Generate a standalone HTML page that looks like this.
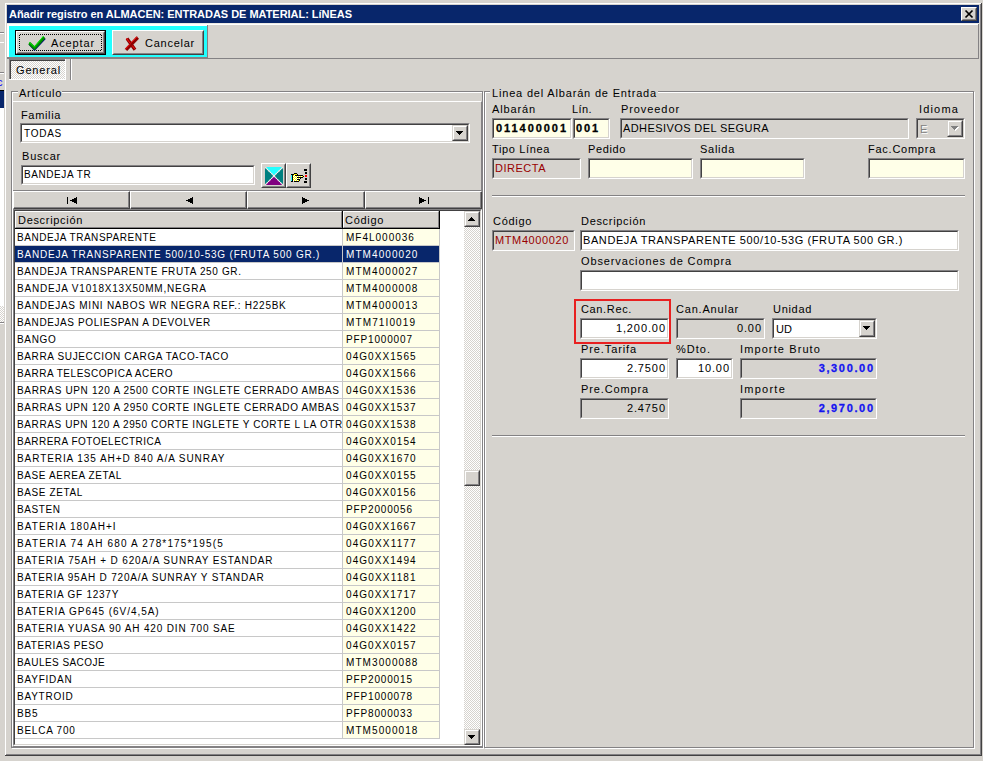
<!DOCTYPE html>
<html><head><meta charset="utf-8"><style>
html,body{margin:0;padding:0;}
body{width:983px;height:761px;overflow:hidden;position:relative;background:#d6d3ce;font-family:"Liberation Sans",sans-serif;font-size:11px;}
div,svg{position:absolute;box-sizing:content-box;}
.t{white-space:pre;line-height:13px;color:#000;font-size:11px;}
</style></head><body>
<div style="left:0px;top:32px;width:4px;height:1px;background:#848284;"></div>
<div style="left:0px;top:33px;width:4px;height:1px;background:#ffffff;"></div>
<div style="left:0px;top:42px;width:4px;height:1px;background:#ffffff;"></div>
<div style="left:0px;top:72px;width:4px;height:1px;background:#848284;"></div>
<div style="left:0px;top:73px;width:4px;height:1px;background:#ffffff;"></div>
<div class="t" style="left:-3px;top:76px;color:#0000ff">c</div>
<div style="left:0px;top:90px;width:4px;height:1px;background:#000;"></div>
<div style="left:0px;top:91px;width:4px;height:17px;background:#08266b;"></div>
<div style="left:0px;top:108px;width:4px;height:198px;background:#ffffff;"></div>
<div style="left:0px;top:306px;width:4px;height:16px;background:#fff;background-image:repeating-conic-gradient(#ffffff 0 25%, #d6d3ce 0 50%);background-size:2px 2px;"></div>
<div style="left:0px;top:322px;width:4px;height:1px;background:#848284;"></div>
<div style="left:0px;top:323px;width:4px;height:1px;background:#ffffff;"></div>
<div style="left:4px;top:2px;width:978px;height:754px;background:#d6d3ce;"></div>
<div style="left:5px;top:3px;width:1px;height:752px;background:#ffffff;"></div>
<div style="left:5px;top:3px;width:976px;height:1px;background:#ffffff;"></div>
<div style="left:981px;top:3px;width:1px;height:753px;background:#424142;"></div>
<div style="left:5px;top:755px;width:977px;height:1px;background:#424142;"></div>
<div style="left:980px;top:4px;width:1px;height:751px;background:#848284;"></div>
<div style="left:6px;top:754px;width:975px;height:1px;background:#848284;"></div>
<div style="left:7px;top:5px;width:972px;height:18px;background:#08266b;"></div>
<div class="t" style="left:9px;top:8px;letter-spacing:-0.030px;font-weight:bold;color:#fff;">Añadir registro en ALMACEN: ENTRADAS DE MATERIAL: LíNEAS</div>
<div style="left:961px;top:7px;width:14px;height:12px;border:1px solid;border-color:#ffffff #424142 #424142 #ffffff;background:#d6d3ce"></div>
<div style="left:962px;top:8px;width:12px;height:10px;border:1px solid;border-color:#d6d3ce #848284 #848284 #d6d3ce;background:#d6d3ce"></div>
<svg style="left:961px;top:7px" width="16" height="14"><path d="M4.5 3.5 L11.5 10.5 M11.5 3.5 L4.5 10.5" stroke="#000" stroke-width="1.7"/></svg>
<div style="left:7px;top:23px;width:972px;height:1px;background:#eceae4;"></div>
<div style="left:7px;top:24px;width:972px;height:1px;background:#ffffff;"></div>
<div style="left:7px;top:25px;width:200px;height:1px;background:#ffffff;"></div>
<div style="left:7px;top:24px;width:1px;height:34px;background:#ffffff;"></div>
<div style="left:8px;top:24px;width:1px;height:34px;background:#ffffff;"></div>
<div style="left:978px;top:24px;width:1px;height:34px;background:#848284;"></div>
<div style="left:7px;top:57px;width:201px;height:1px;background:#8a8080;"></div>
<div style="left:7px;top:58px;width:972px;height:1px;background:#848284;"></div>
<div style="left:9px;top:26px;width:198px;height:31px;background:#22ffff;"></div>
<div style="left:207px;top:25px;width:1px;height:33px;background:#848284;"></div>
<div style="left:15px;top:30px;width:91px;height:25px;background:#000;"></div>
<div style="left:16px;top:31px;width:87px;height:21px;border:1px solid;border-color:#ffffff #424142 #424142 #ffffff;background:#d6d3ce"></div>
<div style="left:17px;top:32px;width:85px;height:19px;border:1px solid;border-color:#d6d3ce #848284 #848284 #d6d3ce;background:#d6d3ce"></div>
<div style="left:20px;top:34px;width:82px;height:1px;background:transparent;background:repeating-linear-gradient(90deg,#000 0 1px,transparent 1px 2px);"></div>
<div style="left:20px;top:50px;width:82px;height:1px;background:transparent;background:repeating-linear-gradient(90deg,#000 0 1px,transparent 1px 2px);"></div>
<div style="left:19px;top:35px;width:1px;height:15px;background:transparent;background:repeating-linear-gradient(180deg,#000 0 1px,transparent 1px 2px);"></div>
<div style="left:101px;top:35px;width:1px;height:15px;background:transparent;background:repeating-linear-gradient(180deg,#000 0 1px,transparent 1px 2px);"></div>
<svg style="left:24px;top:32px" width="26" height="20"><path d="M5.8 12.2 L10.5 17.2 L20.8 6.2" fill="none" stroke="#000080" stroke-width="2.6"/><path d="M5.2 11.2 L10.5 16.2 L20.2 5.2" fill="none" stroke="#008a00" stroke-width="3"/><path d="M5.2 10.2 L10.5 15 L19.6 4" fill="none" stroke="#00f000" stroke-width="1"/></svg>
<div class="t" style="left:51px;top:37px;letter-spacing:0.870px;">Aceptar</div>
<div style="left:112px;top:30px;width:90px;height:23px;border:1px solid;border-color:#ffffff #424142 #424142 #ffffff;background:#d6d3ce"></div>
<div style="left:113px;top:31px;width:88px;height:21px;border:1px solid;border-color:#d6d3ce #848284 #848284 #d6d3ce;background:#d6d3ce"></div>
<svg style="left:120px;top:32px" width="24" height="20"><path d="M7 6.5 L15 17.8 M17.8 5.5 L6 17.8" stroke="#8c0000" stroke-width="3.3"/><path d="M6.3 6.2 L10.5 11.5 M17 4.8 L11.3 10.6 M10 12.3 L5.3 17.2 M12.3 13.6 L14.6 16.8" stroke="#ff1010" stroke-width="1"/></svg>
<div class="t" style="left:145px;top:37px;letter-spacing:0.747px;">Cancelar</div>
<div style="left:9px;top:58px;width:56px;height:21px;background:#848284;"></div>
<div style="left:10px;top:60px;width:55px;height:19px;background:#424142;"></div>
<div style="left:11px;top:61px;width:54px;height:18px;background:#fff;background-image:repeating-conic-gradient(#ffffff 0 25%, #d6d3ce 0 50%);background-size:2px 2px;"></div>
<div style="left:65px;top:59px;width:1px;height:21px;background:#ffffff;"></div>
<div style="left:9px;top:79px;width:57px;height:1px;background:#ffffff;"></div>
<div class="t" style="left:16px;top:64px;letter-spacing:0.838px;">General</div>
<div style="left:70px;top:59px;width:1px;height:21px;background:#848284;"></div>
<div style="left:71px;top:59px;width:1px;height:21px;background:#ffffff;"></div>
<div style="left:12px;top:92px;width:470px;height:655px;border:1px solid #ffffff"></div>
<div style="left:11px;top:91px;width:470px;height:655px;border:1px solid #848284"></div>
<div style="left:18px;top:85px;width:44px;height:10px;background:#d6d3ce;"></div>
<div class="t" style="left:19px;top:87px;letter-spacing:0.714px;">Artículo</div>
<div style="left:12px;top:101px;width:468px;height:644px;border:1px solid;border-color:#ffffff #848284 #848284 #ffffff"></div>
<div class="t" style="left:21px;top:109px;letter-spacing:0.650px;">Familia</div>
<div style="left:20px;top:123px;width:448px;height:18px;border:1px solid;border-color:#848284 #ffffff #ffffff #848284;background:#d6d3ce"></div>
<div style="left:21px;top:124px;width:446px;height:16px;border:1px solid;border-color:#424142 #d6d3ce #d6d3ce #424142;background:#ffffff"></div>
<div class="t" style="left:24px;top:127px;letter-spacing:0.744px;font-size:10px;">TODAS</div>
<div style="left:452px;top:125px;width:14px;height:14px;border:1px solid;border-color:#d6d3ce #424142 #424142 #d6d3ce;background:#d6d3ce"></div>
<div style="left:453px;top:126px;width:12px;height:12px;border:1px solid;border-color:#ffffff #848284 #848284 #ffffff;background:#d6d3ce"></div>
<div style="left:459px;top:134px;width:1px;height:1px;background:#000"></div><div style="left:458px;top:133px;width:3px;height:1px;background:#000"></div><div style="left:457px;top:132px;width:5px;height:1px;background:#000"></div><div style="left:456px;top:131px;width:7px;height:1px;background:#000"></div>
<div class="t" style="left:22px;top:150px;letter-spacing:0.794px;">Buscar</div>
<div style="left:21px;top:165px;width:232px;height:18px;border:1px solid;border-color:#848284 #ffffff #ffffff #848284;background:#d6d3ce"></div>
<div style="left:22px;top:166px;width:230px;height:16px;border:1px solid;border-color:#424142 #d6d3ce #d6d3ce #424142;background:#ffffff"></div>
<div class="t" style="left:24px;top:168px;letter-spacing:0.574px;font-size:10px;">BANDEJA TR</div>
<div style="left:261px;top:163px;width:23px;height:23px;border:1px solid;border-color:#ffffff #424142 #424142 #ffffff;background:#d6d3ce"></div>
<div style="left:262px;top:164px;width:21px;height:21px;border:1px solid;border-color:#d6d3ce #848284 #848284 #d6d3ce;background:#d6d3ce"></div>
<svg style="left:265px;top:167px" width="18" height="18" shape-rendering="crispEdges"><path d="M1 0 L17 0 L9 9 Z" fill="#22ffff"/><path d="M1 18 L17 18 L9 9 Z" fill="#800080"/><path d="M0 1 L9 9 L0 17 Z" fill="#008080"/><path d="M18 1 L9 9 L18 17 Z" fill="#008080"/></svg>
<svg style="left:265px;top:167px" width="18" height="18"><path d="M0.5 0.5 L17.5 17.5 M17.5 0.5 L0.5 17.5" stroke="#f4f0f0" stroke-width="1.2" stroke-dasharray="1.4 0.7"/></svg>
<div style="left:286px;top:163px;width:23px;height:23px;border:1px solid;border-color:#ffffff #424142 #424142 #ffffff;background:#d6d3ce"></div>
<div style="left:287px;top:164px;width:21px;height:21px;border:1px solid;border-color:#d6d3ce #848284 #848284 #d6d3ce;background:#d6d3ce"></div>
<svg style="left:289px;top:171px" width="16" height="12" shape-rendering="crispEdges"><rect x="5" y="2" width="1" height="1" fill="#000"/><rect x="6" y="2" width="1" height="1" fill="#000"/><rect x="7" y="2" width="1" height="1" fill="#000"/><rect x="2" y="3" width="1" height="1" fill="#000"/><rect x="3" y="3" width="1" height="1" fill="#000"/><rect x="4" y="3" width="1" height="1" fill="#000"/><rect x="5" y="3" width="1" height="1" fill="#ffff00"/><rect x="6" y="3" width="1" height="1" fill="#ffff00"/><rect x="7" y="3" width="1" height="1" fill="#ffff00"/><rect x="8" y="3" width="1" height="1" fill="#000"/><rect x="2" y="4" width="1" height="1" fill="#22ffff"/><rect x="3" y="4" width="1" height="1" fill="#000"/><rect x="4" y="4" width="1" height="1" fill="#ffff00"/><rect x="5" y="4" width="1" height="1" fill="#ffffff"/><rect x="6" y="4" width="1" height="1" fill="#000"/><rect x="7" y="4" width="1" height="1" fill="#000"/><rect x="8" y="4" width="1" height="1" fill="#000"/><rect x="9" y="4" width="1" height="1" fill="#000"/><rect x="10" y="4" width="1" height="1" fill="#000"/><rect x="11" y="4" width="1" height="1" fill="#000"/><rect x="12" y="4" width="1" height="1" fill="#000"/><rect x="13" y="4" width="1" height="1" fill="#000"/><rect x="2" y="5" width="1" height="1" fill="#22ffff"/><rect x="3" y="5" width="1" height="1" fill="#000"/><rect x="4" y="5" width="1" height="1" fill="#ffffff"/><rect x="5" y="5" width="1" height="1" fill="#ffff00"/><rect x="6" y="5" width="1" height="1" fill="#ffffff"/><rect x="7" y="5" width="1" height="1" fill="#ffff00"/><rect x="8" y="5" width="1" height="1" fill="#ffffff"/><rect x="9" y="5" width="1" height="1" fill="#ffff00"/><rect x="10" y="5" width="1" height="1" fill="#ffffff"/><rect x="11" y="5" width="1" height="1" fill="#ffff00"/><rect x="12" y="5" width="1" height="1" fill="#ffffff"/><rect x="13" y="5" width="1" height="1" fill="#ffff00"/><rect x="14" y="5" width="1" height="1" fill="#000"/><rect x="2" y="6" width="1" height="1" fill="#22ffff"/><rect x="3" y="6" width="1" height="1" fill="#000"/><rect x="4" y="6" width="1" height="1" fill="#ffff00"/><rect x="5" y="6" width="1" height="1" fill="#ffffff"/><rect x="6" y="6" width="1" height="1" fill="#ffff00"/><rect x="7" y="6" width="1" height="1" fill="#ffffff"/><rect x="8" y="6" width="1" height="1" fill="#000"/><rect x="9" y="6" width="1" height="1" fill="#000"/><rect x="10" y="6" width="1" height="1" fill="#000"/><rect x="11" y="6" width="1" height="1" fill="#000"/><rect x="12" y="6" width="1" height="1" fill="#000"/><rect x="13" y="6" width="1" height="1" fill="#000"/><rect x="2" y="7" width="1" height="1" fill="#22ffff"/><rect x="3" y="7" width="1" height="1" fill="#000"/><rect x="4" y="7" width="1" height="1" fill="#ffffff"/><rect x="5" y="7" width="1" height="1" fill="#ffff00"/><rect x="6" y="7" width="1" height="1" fill="#ffffff"/><rect x="7" y="7" width="1" height="1" fill="#ffff00"/><rect x="8" y="7" width="1" height="1" fill="#ffffff"/><rect x="9" y="7" width="1" height="1" fill="#ffff00"/><rect x="10" y="7" width="1" height="1" fill="#ffffff"/><rect x="11" y="7" width="1" height="1" fill="#000"/><rect x="2" y="8" width="1" height="1" fill="#22ffff"/><rect x="3" y="8" width="1" height="1" fill="#000"/><rect x="4" y="8" width="1" height="1" fill="#ffff00"/><rect x="5" y="8" width="1" height="1" fill="#ffffff"/><rect x="6" y="8" width="1" height="1" fill="#ffff00"/><rect x="7" y="8" width="1" height="1" fill="#ffffff"/><rect x="8" y="8" width="1" height="1" fill="#000"/><rect x="9" y="8" width="1" height="1" fill="#000"/><rect x="10" y="8" width="1" height="1" fill="#000"/><rect x="2" y="9" width="1" height="1" fill="#22ffff"/><rect x="3" y="9" width="1" height="1" fill="#000"/><rect x="4" y="9" width="1" height="1" fill="#ffffff"/><rect x="5" y="9" width="1" height="1" fill="#ffff00"/><rect x="6" y="9" width="1" height="1" fill="#ffffff"/><rect x="7" y="9" width="1" height="1" fill="#ffff00"/><rect x="8" y="9" width="1" height="1" fill="#ffffff"/><rect x="9" y="9" width="1" height="1" fill="#ffff00"/><rect x="10" y="9" width="1" height="1" fill="#000"/><rect x="2" y="10" width="1" height="1" fill="#000"/><rect x="3" y="10" width="1" height="1" fill="#000"/><rect x="5" y="10" width="1" height="1" fill="#000"/><rect x="6" y="10" width="1" height="1" fill="#000"/><rect x="7" y="10" width="1" height="1" fill="#000"/><rect x="8" y="10" width="1" height="1" fill="#000"/><rect x="9" y="10" width="1" height="1" fill="#000"/></svg>
<svg style="left:286px;top:163px" width="25" height="25" shape-rendering="crispEdges"><rect x="18" y="6" width="3" height="2" fill="#000"/><rect x="19" y="9" width="2" height="2" fill="#000"/><rect x="19" y="12" width="2" height="2" fill="#ff0000"/><rect x="19" y="15" width="2" height="2" fill="#000"/><rect x="18" y="18" width="3" height="2" fill="#000"/></svg>
<div style="left:13px;top:190px;width:469px;height:1px;background:#848284;"></div>
<div style="left:13px;top:191px;width:115px;height:16px;border:1px solid;border-color:#ffffff #424142 #424142 #ffffff;background:#d6d3ce"></div>
<div style="left:14px;top:192px;width:114px;height:15px;border-right:1px solid #848284;border-bottom:1px solid #848284"></div>
<div style="left:130px;top:191px;width:115px;height:16px;border:1px solid;border-color:#ffffff #424142 #424142 #ffffff;background:#d6d3ce"></div>
<div style="left:131px;top:192px;width:114px;height:15px;border-right:1px solid #848284;border-bottom:1px solid #848284"></div>
<div style="left:247px;top:191px;width:116px;height:16px;border:1px solid;border-color:#ffffff #424142 #424142 #ffffff;background:#d6d3ce"></div>
<div style="left:248px;top:192px;width:115px;height:15px;border-right:1px solid #848284;border-bottom:1px solid #848284"></div>
<div style="left:365px;top:191px;width:115px;height:16px;border:1px solid;border-color:#ffffff #424142 #424142 #ffffff;background:#d6d3ce"></div>
<div style="left:366px;top:192px;width:114px;height:15px;border-right:1px solid #848284;border-bottom:1px solid #848284"></div>
<div style="left:67px;top:197px;width:1px;height:7px;background:#000;"></div>
<div style="left:76px;top:197px;width:1px;height:7px;background:#000"></div><div style="left:75px;top:198px;width:1px;height:5px;background:#000"></div><div style="left:74px;top:198px;width:1px;height:5px;background:#000"></div><div style="left:73px;top:199px;width:1px;height:3px;background:#000"></div><div style="left:72px;top:199px;width:1px;height:3px;background:#000"></div><div style="left:71px;top:200px;width:1px;height:1px;background:#000"></div><div style="left:70px;top:200px;width:1px;height:1px;background:#000"></div>
<div style="left:192px;top:197px;width:1px;height:7px;background:#000"></div><div style="left:191px;top:198px;width:1px;height:5px;background:#000"></div><div style="left:190px;top:198px;width:1px;height:5px;background:#000"></div><div style="left:189px;top:199px;width:1px;height:3px;background:#000"></div><div style="left:188px;top:199px;width:1px;height:3px;background:#000"></div><div style="left:187px;top:200px;width:1px;height:1px;background:#000"></div><div style="left:186px;top:200px;width:1px;height:1px;background:#000"></div>
<div style="left:302px;top:197px;width:1px;height:7px;background:#000"></div><div style="left:303px;top:198px;width:1px;height:5px;background:#000"></div><div style="left:304px;top:198px;width:1px;height:5px;background:#000"></div><div style="left:305px;top:199px;width:1px;height:3px;background:#000"></div><div style="left:306px;top:199px;width:1px;height:3px;background:#000"></div><div style="left:307px;top:200px;width:1px;height:1px;background:#000"></div><div style="left:308px;top:200px;width:1px;height:1px;background:#000"></div>
<div style="left:419px;top:197px;width:1px;height:7px;background:#000"></div><div style="left:420px;top:198px;width:1px;height:5px;background:#000"></div><div style="left:421px;top:198px;width:1px;height:5px;background:#000"></div><div style="left:422px;top:199px;width:1px;height:3px;background:#000"></div><div style="left:423px;top:199px;width:1px;height:3px;background:#000"></div><div style="left:424px;top:200px;width:1px;height:1px;background:#000"></div><div style="left:425px;top:200px;width:1px;height:1px;background:#000"></div>
<div style="left:428px;top:197px;width:1px;height:7px;background:#000;"></div>
<div style="left:13px;top:209px;width:467px;height:535px;border:1px solid;border-color:#848284 #ffffff #ffffff #848284;"></div>
<div style="left:14px;top:210px;width:465px;height:533px;border:1px solid;border-color:#424142 #d6d3ce #d6d3ce #424142;background:#fff"></div>
<div style="left:15px;top:211px;width:325px;height:15px;border:1px solid;border-color:#ffffff #848284 #848284 #ffffff;background:#d6d3ce"></div>
<div style="left:343px;top:211px;width:94px;height:15px;border:1px solid;border-color:#ffffff #848284 #848284 #ffffff;background:#d6d3ce"></div>
<div style="left:342px;top:211px;width:1px;height:17px;background:#000;"></div>
<div style="left:439px;top:211px;width:1px;height:17px;background:#000;"></div>
<div style="left:15px;top:228px;width:425px;height:1px;background:#000;"></div>
<div class="t" style="left:18px;top:214px;letter-spacing:0.685px;">Descripción</div>
<div class="t" style="left:345px;top:214px;letter-spacing:0.690px;">Código</div>
<div style="left:343px;top:229px;width:96px;height:16px;background:#ffffe8;"></div>
<div style="left:15px;top:245px;width:425px;height:1px;background:#c8c8c8;"></div>
<div style="left:15px;top:229px;width:327px;height:16px;overflow:hidden">
<div class="t" style="left:2px;top:2px;letter-spacing:0.541px;font-size:10px;color:#000;">BANDEJA TRANSPARENTE</div>
</div>
<div class="t" style="left:346px;top:231px;letter-spacing:1.000px;font-size:10px;color:#000;">MF4L000036</div>
<div style="left:15px;top:246px;width:425px;height:16px;background:#08266b;"></div>
<div style="left:15px;top:262px;width:425px;height:1px;background:#c8c8c8;"></div>
<div style="left:15px;top:246px;width:327px;height:16px;overflow:hidden">
<div class="t" style="left:2px;top:2px;letter-spacing:0.800px;font-size:10px;color:#fff;">BANDEJA TRANSPARENTE 500/10-53G (FRUTA 500 GR.)</div>
</div>
<div class="t" style="left:346px;top:248px;letter-spacing:1.074px;font-size:10px;color:#fff;">MTM4000020</div>
<div style="left:343px;top:263px;width:96px;height:16px;background:#ffffe8;"></div>
<div style="left:15px;top:279px;width:425px;height:1px;background:#c8c8c8;"></div>
<div style="left:15px;top:263px;width:327px;height:16px;overflow:hidden">
<div class="t" style="left:2px;top:2px;letter-spacing:0.622px;font-size:10px;color:#000;">BANDEJA TRANSPARENTE FRUTA 250 GR.</div>
</div>
<div class="t" style="left:346px;top:265px;letter-spacing:1.074px;font-size:10px;color:#000;">MTM4000027</div>
<div style="left:343px;top:280px;width:96px;height:16px;background:#ffffe8;"></div>
<div style="left:15px;top:296px;width:425px;height:1px;background:#c8c8c8;"></div>
<div style="left:15px;top:280px;width:327px;height:16px;overflow:hidden">
<div class="t" style="left:2px;top:2px;letter-spacing:0.808px;font-size:10px;color:#000;">BANDEJA V1018X13X50MM,NEGRA</div>
</div>
<div class="t" style="left:346px;top:282px;letter-spacing:1.074px;font-size:10px;color:#000;">MTM4000008</div>
<div style="left:343px;top:297px;width:96px;height:16px;background:#ffffe8;"></div>
<div style="left:15px;top:313px;width:425px;height:1px;background:#c8c8c8;"></div>
<div style="left:15px;top:297px;width:327px;height:16px;overflow:hidden">
<div class="t" style="left:2px;top:2px;letter-spacing:0.746px;font-size:10px;color:#000;">BANDEJAS MINI NABOS WR NEGRA REF.: H225BK</div>
</div>
<div class="t" style="left:346px;top:299px;letter-spacing:1.074px;font-size:10px;color:#000;">MTM4000013</div>
<div style="left:343px;top:314px;width:96px;height:16px;background:#ffffe8;"></div>
<div style="left:15px;top:330px;width:425px;height:1px;background:#c8c8c8;"></div>
<div style="left:15px;top:314px;width:327px;height:16px;overflow:hidden">
<div class="t" style="left:2px;top:2px;letter-spacing:0.606px;font-size:10px;color:#000;">BANDEJAS POLIESPAN A DEVOLVER</div>
</div>
<div class="t" style="left:346px;top:316px;letter-spacing:1.121px;font-size:10px;color:#000;">MTM71I0019</div>
<div style="left:343px;top:331px;width:96px;height:16px;background:#ffffe8;"></div>
<div style="left:15px;top:347px;width:425px;height:1px;background:#c8c8c8;"></div>
<div style="left:15px;top:331px;width:327px;height:16px;overflow:hidden">
<div class="t" style="left:2px;top:2px;letter-spacing:0.670px;font-size:10px;color:#000;">BANGO</div>
</div>
<div class="t" style="left:346px;top:333px;letter-spacing:0.847px;font-size:10px;color:#000;">PFP1000007</div>
<div style="left:343px;top:348px;width:96px;height:16px;background:#ffffe8;"></div>
<div style="left:15px;top:364px;width:425px;height:1px;background:#c8c8c8;"></div>
<div style="left:15px;top:348px;width:327px;height:16px;overflow:hidden">
<div class="t" style="left:2px;top:2px;letter-spacing:0.633px;font-size:10px;color:#000;">BARRA SUJECCION CARGA TACO-TACO</div>
</div>
<div class="t" style="left:346px;top:350px;letter-spacing:1.070px;font-size:10px;color:#000;">04G0XX1565</div>
<div style="left:343px;top:365px;width:96px;height:16px;background:#ffffe8;"></div>
<div style="left:15px;top:381px;width:425px;height:1px;background:#c8c8c8;"></div>
<div style="left:15px;top:365px;width:327px;height:16px;overflow:hidden">
<div class="t" style="left:2px;top:2px;letter-spacing:0.534px;font-size:10px;color:#000;">BARRA TELESCOPICA ACERO</div>
</div>
<div class="t" style="left:346px;top:367px;letter-spacing:1.070px;font-size:10px;color:#000;">04G0XX1566</div>
<div style="left:343px;top:382px;width:96px;height:16px;background:#ffffe8;"></div>
<div style="left:15px;top:398px;width:425px;height:1px;background:#c8c8c8;"></div>
<div style="left:15px;top:382px;width:327px;height:16px;overflow:hidden">
<div class="t" style="left:2px;top:2px;letter-spacing:0.646px;font-size:10px;color:#000;">BARRAS UPN 120 A 2500 CORTE INGLETE CERRADO AMBAS</div>
</div>
<div class="t" style="left:346px;top:384px;letter-spacing:1.070px;font-size:10px;color:#000;">04G0XX1536</div>
<div style="left:343px;top:399px;width:96px;height:16px;background:#ffffe8;"></div>
<div style="left:15px;top:415px;width:425px;height:1px;background:#c8c8c8;"></div>
<div style="left:15px;top:399px;width:327px;height:16px;overflow:hidden">
<div class="t" style="left:2px;top:2px;letter-spacing:0.646px;font-size:10px;color:#000;">BARRAS UPN 120 A 2950 CORTE INGLETE CERRADO AMBAS</div>
</div>
<div class="t" style="left:346px;top:401px;letter-spacing:1.070px;font-size:10px;color:#000;">04G0XX1537</div>
<div style="left:343px;top:416px;width:96px;height:16px;background:#ffffe8;"></div>
<div style="left:15px;top:432px;width:425px;height:1px;background:#c8c8c8;"></div>
<div style="left:15px;top:416px;width:327px;height:16px;overflow:hidden">
<div class="t" style="left:2px;top:2px;letter-spacing:0.612px;font-size:10px;color:#000;">BARRAS UPN 120 A 2950 CORTE INGLETE Y CORTE L LA OTRA</div>
</div>
<div class="t" style="left:346px;top:418px;letter-spacing:1.070px;font-size:10px;color:#000;">04G0XX1538</div>
<div style="left:343px;top:433px;width:96px;height:16px;background:#ffffe8;"></div>
<div style="left:15px;top:449px;width:425px;height:1px;background:#c8c8c8;"></div>
<div style="left:15px;top:433px;width:327px;height:16px;overflow:hidden">
<div class="t" style="left:2px;top:2px;letter-spacing:0.483px;font-size:10px;color:#000;">BARRERA FOTOELECTRICA</div>
</div>
<div class="t" style="left:346px;top:435px;letter-spacing:1.070px;font-size:10px;color:#000;">04G0XX0154</div>
<div style="left:343px;top:450px;width:96px;height:16px;background:#ffffe8;"></div>
<div style="left:15px;top:466px;width:425px;height:1px;background:#c8c8c8;"></div>
<div style="left:15px;top:450px;width:327px;height:16px;overflow:hidden">
<div class="t" style="left:2px;top:2px;letter-spacing:0.920px;font-size:10px;color:#000;">BARTERIA 135 AH+D 840 A/A SUNRAY</div>
</div>
<div class="t" style="left:346px;top:452px;letter-spacing:1.070px;font-size:10px;color:#000;">04G0XX1670</div>
<div style="left:343px;top:467px;width:96px;height:16px;background:#ffffe8;"></div>
<div style="left:15px;top:483px;width:425px;height:1px;background:#c8c8c8;"></div>
<div style="left:15px;top:467px;width:327px;height:16px;overflow:hidden">
<div class="t" style="left:2px;top:2px;letter-spacing:0.595px;font-size:10px;color:#000;">BASE AEREA ZETAL</div>
</div>
<div class="t" style="left:346px;top:469px;letter-spacing:1.070px;font-size:10px;color:#000;">04G0XX0155</div>
<div style="left:343px;top:484px;width:96px;height:16px;background:#ffffe8;"></div>
<div style="left:15px;top:500px;width:425px;height:1px;background:#c8c8c8;"></div>
<div style="left:15px;top:484px;width:327px;height:16px;overflow:hidden">
<div class="t" style="left:2px;top:2px;letter-spacing:0.621px;font-size:10px;color:#000;">BASE ZETAL</div>
</div>
<div class="t" style="left:346px;top:486px;letter-spacing:1.070px;font-size:10px;color:#000;">04G0XX0156</div>
<div style="left:343px;top:501px;width:96px;height:16px;background:#ffffe8;"></div>
<div style="left:15px;top:517px;width:425px;height:1px;background:#c8c8c8;"></div>
<div style="left:15px;top:501px;width:327px;height:16px;overflow:hidden">
<div class="t" style="left:2px;top:2px;letter-spacing:0.571px;font-size:10px;color:#000;">BASTEN</div>
</div>
<div class="t" style="left:346px;top:503px;letter-spacing:0.847px;font-size:10px;color:#000;">PFP2000056</div>
<div style="left:343px;top:518px;width:96px;height:16px;background:#ffffe8;"></div>
<div style="left:15px;top:534px;width:425px;height:1px;background:#c8c8c8;"></div>
<div style="left:15px;top:518px;width:327px;height:16px;overflow:hidden">
<div class="t" style="left:2px;top:2px;letter-spacing:1.084px;font-size:10px;color:#000;">BATERIA 180AH+I</div>
</div>
<div class="t" style="left:346px;top:520px;letter-spacing:1.070px;font-size:10px;color:#000;">04G0XX1667</div>
<div style="left:343px;top:535px;width:96px;height:16px;background:#ffffe8;"></div>
<div style="left:15px;top:551px;width:425px;height:1px;background:#c8c8c8;"></div>
<div style="left:15px;top:535px;width:327px;height:16px;overflow:hidden">
<div class="t" style="left:2px;top:2px;letter-spacing:1.155px;font-size:10px;color:#000;">BATERIA 74 AH 680 A 278*175*195(5</div>
</div>
<div class="t" style="left:346px;top:537px;letter-spacing:1.145px;font-size:10px;color:#000;">04G0XX1177</div>
<div style="left:343px;top:552px;width:96px;height:16px;background:#ffffe8;"></div>
<div style="left:15px;top:568px;width:425px;height:1px;background:#c8c8c8;"></div>
<div style="left:15px;top:552px;width:327px;height:16px;overflow:hidden">
<div class="t" style="left:2px;top:2px;letter-spacing:0.857px;font-size:10px;color:#000;">BATERIA 75AH + D 620A/A SUNRAY ESTANDAR</div>
</div>
<div class="t" style="left:346px;top:554px;letter-spacing:1.070px;font-size:10px;color:#000;">04G0XX1494</div>
<div style="left:343px;top:569px;width:96px;height:16px;background:#ffffe8;"></div>
<div style="left:15px;top:585px;width:425px;height:1px;background:#c8c8c8;"></div>
<div style="left:15px;top:569px;width:327px;height:16px;overflow:hidden">
<div class="t" style="left:2px;top:2px;letter-spacing:0.807px;font-size:10px;color:#000;">BATERIA 95AH D 720A/A SUNRAY Y STANDAR</div>
</div>
<div class="t" style="left:346px;top:571px;letter-spacing:1.145px;font-size:10px;color:#000;">04G0XX1181</div>
<div style="left:343px;top:586px;width:96px;height:16px;background:#ffffe8;"></div>
<div style="left:15px;top:602px;width:425px;height:1px;background:#c8c8c8;"></div>
<div style="left:15px;top:586px;width:327px;height:16px;overflow:hidden">
<div class="t" style="left:2px;top:2px;letter-spacing:0.768px;font-size:10px;color:#000;">BATERIA GF 1237Y</div>
</div>
<div class="t" style="left:346px;top:588px;letter-spacing:1.070px;font-size:10px;color:#000;">04G0XX1717</div>
<div style="left:343px;top:603px;width:96px;height:16px;background:#ffffe8;"></div>
<div style="left:15px;top:619px;width:425px;height:1px;background:#c8c8c8;"></div>
<div style="left:15px;top:603px;width:327px;height:16px;overflow:hidden">
<div class="t" style="left:2px;top:2px;letter-spacing:0.967px;font-size:10px;color:#000;">BATERIA GP645 (6V/4,5A)</div>
</div>
<div class="t" style="left:346px;top:605px;letter-spacing:1.070px;font-size:10px;color:#000;">04G0XX1200</div>
<div style="left:343px;top:620px;width:96px;height:16px;background:#ffffe8;"></div>
<div style="left:15px;top:636px;width:425px;height:1px;background:#c8c8c8;"></div>
<div style="left:15px;top:620px;width:327px;height:16px;overflow:hidden">
<div class="t" style="left:2px;top:2px;letter-spacing:0.836px;font-size:10px;color:#000;">BATERIA YUASA 90 AH 420 DIN 700 SAE</div>
</div>
<div class="t" style="left:346px;top:622px;letter-spacing:1.070px;font-size:10px;color:#000;">04G0XX1422</div>
<div style="left:343px;top:637px;width:96px;height:16px;background:#ffffe8;"></div>
<div style="left:15px;top:653px;width:425px;height:1px;background:#c8c8c8;"></div>
<div style="left:15px;top:637px;width:327px;height:16px;overflow:hidden">
<div class="t" style="left:2px;top:2px;letter-spacing:0.589px;font-size:10px;color:#000;">BATERIAS PESO</div>
</div>
<div class="t" style="left:346px;top:639px;letter-spacing:1.070px;font-size:10px;color:#000;">04G0XX0157</div>
<div style="left:343px;top:654px;width:96px;height:16px;background:#ffffe8;"></div>
<div style="left:15px;top:670px;width:425px;height:1px;background:#c8c8c8;"></div>
<div style="left:15px;top:654px;width:327px;height:16px;overflow:hidden">
<div class="t" style="left:2px;top:2px;letter-spacing:0.449px;font-size:10px;color:#000;">BAULES SACOJE</div>
</div>
<div class="t" style="left:346px;top:656px;letter-spacing:1.074px;font-size:10px;color:#000;">MTM3000088</div>
<div style="left:343px;top:671px;width:96px;height:16px;background:#ffffe8;"></div>
<div style="left:15px;top:687px;width:425px;height:1px;background:#c8c8c8;"></div>
<div style="left:15px;top:671px;width:327px;height:16px;overflow:hidden">
<div class="t" style="left:2px;top:2px;letter-spacing:0.791px;font-size:10px;color:#000;">BAYFIDAN</div>
</div>
<div class="t" style="left:346px;top:673px;letter-spacing:0.847px;font-size:10px;color:#000;">PFP2000015</div>
<div style="left:343px;top:688px;width:96px;height:16px;background:#ffffe8;"></div>
<div style="left:15px;top:704px;width:425px;height:1px;background:#c8c8c8;"></div>
<div style="left:15px;top:688px;width:327px;height:16px;overflow:hidden">
<div class="t" style="left:2px;top:2px;letter-spacing:0.775px;font-size:10px;color:#000;">BAYTROID</div>
</div>
<div class="t" style="left:346px;top:690px;letter-spacing:0.847px;font-size:10px;color:#000;">PFP1000078</div>
<div style="left:343px;top:705px;width:96px;height:16px;background:#ffffe8;"></div>
<div style="left:15px;top:721px;width:425px;height:1px;background:#c8c8c8;"></div>
<div style="left:15px;top:705px;width:327px;height:16px;overflow:hidden">
<div class="t" style="left:2px;top:2px;letter-spacing:0.878px;font-size:10px;color:#000;">BB5</div>
</div>
<div class="t" style="left:346px;top:707px;letter-spacing:0.847px;font-size:10px;color:#000;">PFP8000033</div>
<div style="left:343px;top:722px;width:96px;height:16px;background:#ffffe8;"></div>
<div style="left:15px;top:738px;width:425px;height:1px;background:#c8c8c8;"></div>
<div style="left:15px;top:722px;width:327px;height:16px;overflow:hidden">
<div class="t" style="left:2px;top:2px;letter-spacing:0.766px;font-size:10px;color:#000;">BELCA 700</div>
</div>
<div class="t" style="left:346px;top:724px;letter-spacing:1.074px;font-size:10px;color:#000;">MTM5000018</div>
<div style="left:342px;top:229px;width:1px;height:510px;background:#c8c8c8;"></div>
<div style="left:439px;top:229px;width:1px;height:510px;background:#c8c8c8;"></div>
<div style="left:464px;top:212px;width:16px;height:533px;background:#fff;background-image:repeating-conic-gradient(#ffffff 0 25%, #d6d3ce 0 50%);background-size:2px 2px;"></div>
<div style="left:464px;top:211px;width:14px;height:14px;border:1px solid;border-color:#d6d3ce #424142 #424142 #d6d3ce;background:#d6d3ce"></div>
<div style="left:465px;top:212px;width:12px;height:12px;border:1px solid;border-color:#ffffff #848284 #848284 #ffffff;background:#d6d3ce"></div>
<div style="left:471px;top:217px;width:1px;height:1px;background:#000"></div><div style="left:470px;top:218px;width:3px;height:1px;background:#000"></div><div style="left:469px;top:219px;width:5px;height:1px;background:#000"></div><div style="left:468px;top:220px;width:7px;height:1px;background:#000"></div>
<div style="left:464px;top:470px;width:14px;height:14px;border:1px solid;border-color:#d6d3ce #424142 #424142 #d6d3ce;background:#d6d3ce"></div>
<div style="left:465px;top:471px;width:12px;height:12px;border:1px solid;border-color:#ffffff #848284 #848284 #ffffff;background:#d6d3ce"></div>
<div style="left:464px;top:729px;width:14px;height:14px;border:1px solid;border-color:#d6d3ce #424142 #424142 #d6d3ce;background:#d6d3ce"></div>
<div style="left:465px;top:730px;width:12px;height:12px;border:1px solid;border-color:#ffffff #848284 #848284 #ffffff;background:#d6d3ce"></div>
<div style="left:471px;top:738px;width:1px;height:1px;background:#000"></div><div style="left:470px;top:737px;width:3px;height:1px;background:#000"></div><div style="left:469px;top:736px;width:5px;height:1px;background:#000"></div><div style="left:468px;top:735px;width:7px;height:1px;background:#000"></div>
<div style="left:485px;top:92px;width:488px;height:655px;border:1px solid #ffffff"></div>
<div style="left:484px;top:91px;width:488px;height:655px;border:1px solid #848284"></div>
<div style="left:490px;top:85px;width:168px;height:10px;background:#d6d3ce;"></div>
<div class="t" style="left:492px;top:87px;letter-spacing:0.825px;">Linea del Albarán de Entrada</div>
<div class="t" style="left:492px;top:103px;letter-spacing:0.869px;">Albarán</div>
<div class="t" style="left:572px;top:103px;letter-spacing:0.413px;">Lín.</div>
<div class="t" style="left:621px;top:103px;letter-spacing:0.916px;">Proveedor</div>
<div class="t" style="left:919px;top:103px;letter-spacing:1.164px;">Idioma</div>
<div style="left:492px;top:118px;width:78px;height:19px;border:1px solid;border-color:#848284 #ffffff #ffffff #848284;background:#d6d3ce"></div>
<div style="left:493px;top:119px;width:76px;height:17px;border:1px solid;border-color:#424142 #d6d3ce #d6d3ce #424142;background:#ffffe8"></div>
<div class="t" style="left:496px;top:122px;letter-spacing:1.950px;font-weight:bold;-webkit-text-stroke:0.3px #000;">011400001</div>
<div style="left:573px;top:118px;width:35px;height:19px;border:1px solid;border-color:#848284 #ffffff #ffffff #848284;background:#d6d3ce"></div>
<div style="left:574px;top:119px;width:33px;height:17px;border:1px solid;border-color:#424142 #d6d3ce #d6d3ce #424142;background:#ffffe8"></div>
<div class="t" style="left:576px;top:122px;letter-spacing:1.882px;font-weight:bold;-webkit-text-stroke:0.3px #000;">001</div>
<div style="left:620px;top:118px;width:287px;height:19px;border:1px solid;border-color:#848284 #ffffff #ffffff #848284;background:#d6d3ce"></div>
<div style="left:621px;top:119px;width:285px;height:17px;border:1px solid;border-color:#424142 #d6d3ce #d6d3ce #424142;background:#d6d3ce"></div>
<div class="t" style="left:623px;top:122px;letter-spacing:0.413px;">ADHESIVOS DEL SEGURA</div>
<div style="left:916px;top:118px;width:47px;height:19px;border:1px solid;border-color:#848284 #ffffff #ffffff #848284;background:#d6d3ce"></div>
<div style="left:917px;top:119px;width:45px;height:17px;border:1px solid;border-color:#424142 #d6d3ce #d6d3ce #424142;background:#d6d3ce"></div>
<div class="t" style="left:921px;top:124px;letter-spacing:-0.337px;color:#ffffff;">E</div>
<div class="t" style="left:920px;top:123px;letter-spacing:-0.337px;color:#808080;">E</div>
<div style="left:947px;top:120px;width:14px;height:15px;border:1px solid;border-color:#d6d3ce #424142 #424142 #d6d3ce;background:#d6d3ce"></div>
<div style="left:948px;top:121px;width:12px;height:13px;border:1px solid;border-color:#ffffff #848284 #848284 #ffffff;background:#d6d3ce"></div>
<div style="left:955px;top:130px;width:1px;height:1px;background:#ffffff"></div><div style="left:954px;top:129px;width:3px;height:1px;background:#ffffff"></div><div style="left:953px;top:128px;width:5px;height:1px;background:#ffffff"></div><div style="left:952px;top:127px;width:7px;height:1px;background:#ffffff"></div>
<div style="left:954px;top:129px;width:1px;height:1px;background:#808080"></div><div style="left:953px;top:128px;width:3px;height:1px;background:#808080"></div><div style="left:952px;top:127px;width:5px;height:1px;background:#808080"></div><div style="left:951px;top:126px;width:7px;height:1px;background:#808080"></div>
<div class="t" style="left:492px;top:143px;letter-spacing:0.643px;">Tipo Línea</div>
<div class="t" style="left:588px;top:143px;letter-spacing:0.625px;">Pedido</div>
<div class="t" style="left:700px;top:143px;letter-spacing:0.737px;">Salida</div>
<div class="t" style="left:868px;top:143px;letter-spacing:0.748px;">Fac.Compra</div>
<div style="left:492px;top:158px;width:87px;height:19px;border:1px solid;border-color:#848284 #ffffff #ffffff #848284;background:#d6d3ce"></div>
<div style="left:493px;top:159px;width:85px;height:17px;border:1px solid;border-color:#424142 #d6d3ce #d6d3ce #424142;background:#d6d3ce"></div>
<div class="t" style="left:495px;top:162px;letter-spacing:0.505px;color:#990000;">DIRECTA</div>
<div style="left:588px;top:158px;width:103px;height:19px;border:1px solid;border-color:#848284 #ffffff #ffffff #848284;background:#d6d3ce"></div>
<div style="left:589px;top:159px;width:101px;height:17px;border:1px solid;border-color:#424142 #d6d3ce #d6d3ce #424142;background:#ffffe8"></div>
<div style="left:700px;top:158px;width:103px;height:19px;border:1px solid;border-color:#848284 #ffffff #ffffff #848284;background:#d6d3ce"></div>
<div style="left:701px;top:159px;width:101px;height:17px;border:1px solid;border-color:#424142 #d6d3ce #d6d3ce #424142;background:#ffffe8"></div>
<div style="left:868px;top:158px;width:95px;height:19px;border:1px solid;border-color:#848284 #ffffff #ffffff #848284;background:#d6d3ce"></div>
<div style="left:869px;top:159px;width:93px;height:17px;border:1px solid;border-color:#424142 #d6d3ce #d6d3ce #424142;background:#ffffe8"></div>
<div style="left:492px;top:195px;width:473px;height:1px;background:#848284;"></div>
<div style="left:492px;top:196px;width:473px;height:1px;background:#ffffff;"></div>
<div class="t" style="left:493px;top:215px;letter-spacing:0.690px;">Código</div>
<div class="t" style="left:581px;top:215px;letter-spacing:0.685px;">Descripción</div>
<div style="left:492px;top:230px;width:81px;height:19px;border:1px solid;border-color:#848284 #ffffff #ffffff #848284;background:#d6d3ce"></div>
<div style="left:493px;top:231px;width:79px;height:17px;border:1px solid;border-color:#424142 #d6d3ce #d6d3ce #424142;background:#d6d3ce"></div>
<div class="t" style="left:495px;top:234px;letter-spacing:0.613px;color:#990000;">MTM4000020</div>
<div style="left:580px;top:230px;width:377px;height:19px;border:1px solid;border-color:#848284 #ffffff #ffffff #848284;background:#d6d3ce"></div>
<div style="left:581px;top:231px;width:375px;height:17px;border:1px solid;border-color:#424142 #d6d3ce #d6d3ce #424142;background:#ffffff"></div>
<div class="t" style="left:583px;top:234px;letter-spacing:0.591px;">BANDEJA TRANSPARENTE 500/10-53G (FRUTA 500 GR.)</div>
<div class="t" style="left:581px;top:255px;letter-spacing:0.876px;">Observaciones de Compra</div>
<div style="left:580px;top:270px;width:377px;height:19px;border:1px solid;border-color:#848284 #ffffff #ffffff #848284;background:#d6d3ce"></div>
<div style="left:581px;top:271px;width:375px;height:17px;border:1px solid;border-color:#424142 #d6d3ce #d6d3ce #424142;background:#ffffff"></div>
<div style="left:574px;top:299px;width:97px;height:45px;background:transparent;border:2px solid #e82020;box-sizing:border-box"></div>
<div class="t" style="left:581px;top:303px;letter-spacing:0.643px;">Can.Rec.</div>
<div class="t" style="left:676px;top:303px;letter-spacing:0.797px;">Can.Anular</div>
<div class="t" style="left:773px;top:303px;letter-spacing:0.690px;">Unidad</div>
<div style="left:580px;top:318px;width:87px;height:19px;border:1px solid;border-color:#848284 #ffffff #ffffff #848284;background:#d6d3ce"></div>
<div style="left:581px;top:319px;width:85px;height:17px;border:1px solid;border-color:#424142 #d6d3ce #d6d3ce #424142;background:#ffffff"></div>
<div class="t" style="left:580px;top:322px;letter-spacing:0.898px;width:85px;text-align:right;margin-right:0;">1,200.0<span style="letter-spacing:0">0</span></div>
<div style="left:676px;top:318px;width:87px;height:19px;border:1px solid;border-color:#848284 #ffffff #ffffff #848284;background:#d6d3ce"></div>
<div style="left:677px;top:319px;width:85px;height:17px;border:1px solid;border-color:#424142 #d6d3ce #d6d3ce #424142;background:#d6d3ce"></div>
<div class="t" style="left:676px;top:322px;letter-spacing:0.898px;width:85px;text-align:right;margin-right:0;">0.0<span style="letter-spacing:0">0</span></div>
<div style="left:772px;top:318px;width:103px;height:19px;border:1px solid;border-color:#848284 #ffffff #ffffff #848284;background:#d6d3ce"></div>
<div style="left:773px;top:319px;width:101px;height:17px;border:1px solid;border-color:#424142 #d6d3ce #d6d3ce #424142;background:#ffffff"></div>
<div class="t" style="left:776px;top:323px;letter-spacing:0.056px;">UD</div>
<div style="left:859px;top:320px;width:14px;height:15px;border:1px solid;border-color:#d6d3ce #424142 #424142 #d6d3ce;background:#d6d3ce"></div>
<div style="left:860px;top:321px;width:12px;height:13px;border:1px solid;border-color:#ffffff #848284 #848284 #ffffff;background:#d6d3ce"></div>
<div style="left:866px;top:329px;width:1px;height:1px;background:#000"></div><div style="left:865px;top:328px;width:3px;height:1px;background:#000"></div><div style="left:864px;top:327px;width:5px;height:1px;background:#000"></div><div style="left:863px;top:326px;width:7px;height:1px;background:#000"></div>
<div class="t" style="left:581px;top:343px;letter-spacing:0.893px;">Pre.Tarifa</div>
<div class="t" style="left:676px;top:343px;letter-spacing:1.009px;">%Dto.</div>
<div class="t" style="left:740px;top:343px;letter-spacing:1.105px;">Importe Bruto</div>
<div style="left:580px;top:358px;width:87px;height:19px;border:1px solid;border-color:#848284 #ffffff #ffffff #848284;background:#d6d3ce"></div>
<div style="left:581px;top:359px;width:85px;height:17px;border:1px solid;border-color:#424142 #d6d3ce #d6d3ce #424142;background:#ffffff"></div>
<div class="t" style="left:580px;top:362px;letter-spacing:0.893px;width:85px;text-align:right;margin-right:0;">2.750<span style="letter-spacing:0">0</span></div>
<div style="left:676px;top:358px;width:55px;height:19px;border:1px solid;border-color:#848284 #ffffff #ffffff #848284;background:#d6d3ce"></div>
<div style="left:677px;top:359px;width:53px;height:17px;border:1px solid;border-color:#424142 #d6d3ce #d6d3ce #424142;background:#ffffff"></div>
<div class="t" style="left:676px;top:362px;letter-spacing:0.895px;width:53px;text-align:right;margin-right:0;">10.0<span style="letter-spacing:0">0</span></div>
<div style="left:740px;top:358px;width:135px;height:19px;border:1px solid;border-color:#848284 #ffffff #ffffff #848284;background:#d6d3ce"></div>
<div style="left:741px;top:359px;width:133px;height:17px;border:1px solid;border-color:#424142 #d6d3ce #d6d3ce #424142;background:#d6d3ce"></div>
<div class="t" style="left:740px;top:362px;letter-spacing:1.648px;font-weight:bold;color:#1414f0;width:133px;text-align:right;margin-right:0;-webkit-text-stroke:0.3px #1414f0;">3,300.0<span style="letter-spacing:0">0</span></div>
<div class="t" style="left:581px;top:383px;letter-spacing:0.870px;">Pre.Compra</div>
<div class="t" style="left:740px;top:383px;letter-spacing:1.244px;">Importe</div>
<div style="left:580px;top:398px;width:87px;height:19px;border:1px solid;border-color:#848284 #ffffff #ffffff #848284;background:#d6d3ce"></div>
<div style="left:581px;top:399px;width:85px;height:17px;border:1px solid;border-color:#424142 #d6d3ce #d6d3ce #424142;background:#d6d3ce"></div>
<div class="t" style="left:580px;top:402px;letter-spacing:0.893px;width:85px;text-align:right;margin-right:0;">2.475<span style="letter-spacing:0">0</span></div>
<div style="left:740px;top:398px;width:135px;height:19px;border:1px solid;border-color:#848284 #ffffff #ffffff #848284;background:#d6d3ce"></div>
<div style="left:741px;top:399px;width:133px;height:17px;border:1px solid;border-color:#424142 #d6d3ce #d6d3ce #424142;background:#d6d3ce"></div>
<div class="t" style="left:740px;top:402px;letter-spacing:1.648px;font-weight:bold;color:#1414f0;width:133px;text-align:right;margin-right:0;-webkit-text-stroke:0.3px #1414f0;">2,970.0<span style="letter-spacing:0">0</span></div>
<div style="left:492px;top:435px;width:473px;height:1px;background:#848284;"></div>
<div style="left:492px;top:436px;width:473px;height:1px;background:#ffffff;"></div>
</body></html>
